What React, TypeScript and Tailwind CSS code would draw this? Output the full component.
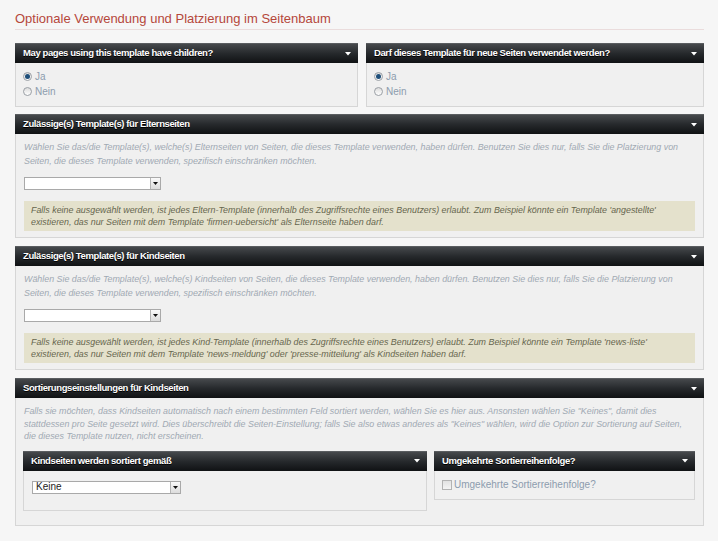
import React from "react";

const font = { fontFamily: '"Liberation Sans", Arial, sans-serif' };

function Arrow() {
  return (
    <svg width="6" height="4" viewBox="0 0 6 4" className="shrink-0">
      <path d="M0 0 H6 L3 3.5 Z" fill="#ffffff" />
    </svg>
  );
}

function Header({ title }: { title: string }) {
  return (
    <div className="h-[20px] flex items-center justify-between pl-[8px] pr-[7px] bg-gradient-to-b from-[#46494c] via-[#26292c] to-[#101214] border-t border-[#5a5d60]">
      <span className="text-[9.5px] font-bold text-white tracking-[-0.4px] [text-shadow:0_1px_0_#000]">{title}</span>
      <Arrow />
    </div>
  );
}

function Radio({ checked, label }: { checked?: boolean; label: string }) {
  return (
    <div className="flex items-center h-[15px]">
      <span className="w-[9px] h-[9px] rounded-full border border-[#9a9fa5] bg-gradient-to-b from-[#dcdcdc] to-[#ffffff] flex items-center justify-center">
        {checked && <span className="w-[5px] h-[5px] rounded-full bg-[#1f4f7a]" />}
      </span>
      <span className="ml-[3px] text-[10px] text-[#8d9cae]">{label}</span>
    </div>
  );
}

function Select({ width, value }: { width: string; value?: string }) {
  return (
    <div className={`${width} h-[13px] bg-white border border-[#a9a9a9] flex items-center justify-between`}>
      <span className="pl-[3px] text-[10px] leading-none text-[#222]">{value ?? ""}</span>
      <span className="w-[10px] h-[11px] border-l border-[#b5b5b5] bg-gradient-to-b from-[#fafafa] to-[#dcdcdc] flex items-center justify-center">
        <svg width="5" height="3" viewBox="0 0 5 3">
          <path d="M0 0 H5 L2.5 3 Z" fill="#111" />
        </svg>
      </span>
    </div>
  );
}

function Body({ children, className }: { children: React.ReactNode; className?: string }) {
  return (
    <div className={`bg-[#f0f0f0] border border-t-0 border-[#d6d6d6] ${className ?? ""}`}>{children}</div>
  );
}

function Desc({ children, leading }: { children: React.ReactNode; leading: string }) {
  return <p className={`text-[8.9px] italic text-[#a0a9b3] ${leading}`}>{children}</p>;
}

function Note({ children }: { children: React.ReactNode }) {
  return (
    <div className="bg-[#e4e1cc] px-[7px] py-[3px] text-[8.9px] leading-[12px] italic text-[#66664e]">
      {children}
    </div>
  );
}

export default function App() {
  return (
    <div className="min-h-[541px] bg-[#f6f6f6] pl-[15px] pr-[14px] pt-[10px] pb-[15px]" style={font}>
      <h1 className="text-[13px] leading-[17px] text-[#b5473b] pb-[2px] border-b border-[#eadcdc]">
        Optionale Verwendung und Platzierung im Seitenbaum
      </h1>

      <div className="grid grid-cols-[343px_1fr] gap-[8px] mt-[13px]">
        <div>
          <Header title="May pages using this template have children?" />
          <Body className="pl-[7px] pt-[6px] pb-[7px]">
            <Radio checked label="Ja" />
            <Radio label="Nein" />
          </Body>
        </div>
        <div>
          <Header title="Darf dieses Template für neue Seiten verwendet werden?" />
          <Body className="pl-[7px] pt-[6px] pb-[7px]">
            <Radio checked label="Ja" />
            <Radio label="Nein" />
          </Body>
        </div>
      </div>

      <div className="mt-[7px]">
        <Header title="Zulässige(s) Template(s) für Elternseiten" />
        <Body className="pl-[8px] pr-[8px] pt-[6px] pb-[6px]">
          <Desc leading="leading-[14px]">
            Wählen Sie das/die Template(s), welche(s) Elternseiten von Seiten, die dieses Template verwenden, haben dürfen. Benutzen Sie dies nur, falls Sie die Platzierung von Seiten, die dieses Template verwenden, spezifisch einschränken möchten.
          </Desc>
          <div className="mt-[9px] mb-[11px]">
            <Select width="w-[137px]" />
          </div>
          <Note>
            Falls keine ausgewählt werden, ist jedes Eltern-Template (innerhalb des Zugriffsrechte eines Benutzers) erlaubt. Zum Beispiel könnte ein Template 'angestellte' existieren, das nur Seiten mit dem Template 'firmen-uebersicht' als Elternseite haben darf.
          </Note>
        </Body>
      </div>

      <div className="mt-[8px]">
        <Header title="Zulässige(s) Template(s) für Kindseiten" />
        <Body className="pl-[8px] pr-[8px] pt-[6px] pb-[6px]">
          <Desc leading="leading-[14px]">
            Wählen Sie das/die Template(s), welche(s) Kindseiten von Seiten, die dieses Template verwenden, haben dürfen. Benutzen Sie dies nur, falls Sie die Platzierung von Seiten, die dieses Template verwenden, spezifisch einschränken möchten.
          </Desc>
          <div className="mt-[9px] mb-[11px]">
            <Select width="w-[137px]" />
          </div>
          <Note>
            Falls keine ausgewählt werden, ist jedes Kind-Template (innerhalb des Zugriffsrechte eines Benutzers) erlaubt. Zum Beispiel könnte ein Template 'news-liste' existieren, das nur Seiten mit dem Template 'news-meldung' oder 'presse-mitteilung' als Kindseiten haben darf.
          </Note>
        </Body>
      </div>

      <div className="mt-[8px]">
        <Header title="Sortierungseinstellungen für Kindseiten" />
        <Body className="pl-[7px] pr-[8px] pt-[7px] pb-[14px]">
          <div className="pl-[1px]">
            <Desc leading="leading-[12.5px]">
              Falls sie möchten, dass Kindseiten automatisch nach einem bestimmten Feld sortiert werden, wählen Sie es hier aus. Ansonsten wählen Sie "Keines", damit dies stattdessen pro Seite gesetzt wird. Dies überschreibt die Seiten-Einstellung; falls Sie also etwas anderes als "Keines" wählen, wird die Option zur Sortierung auf Seiten, die dieses Template nutzen, nicht erscheinen.
            </Desc>
          </div>
          <div className="grid grid-cols-[404px_1fr] gap-[7px] items-start mt-[8px]">
            <div>
              <Header title="Kindseiten werden sortiert gemäß" />
              <Body className="pl-[8px] pt-[10px] pb-[16px]">
                <Select width="w-[149px]" value="Keine" />
              </Body>
            </div>
            <div>
              <Header title="Umgekehrte Sortierreihenfolge?" />
              <Body className="pl-[7px] pt-[8px] pb-[8px]">
                <div className="flex items-center h-[12px]">
                  <span className="w-[10px] h-[10px] border border-[#b3b3b3] bg-gradient-to-b from-[#e2e2e2] to-[#f4f4f4]" />
                  <span className="ml-[2px] text-[10px] text-[#8d9cae]">Umgekehrte Sortierreihenfolge?</span>
                </div>
              </Body>
            </div>
          </div>
        </Body>
      </div>
    </div>
  );
}
